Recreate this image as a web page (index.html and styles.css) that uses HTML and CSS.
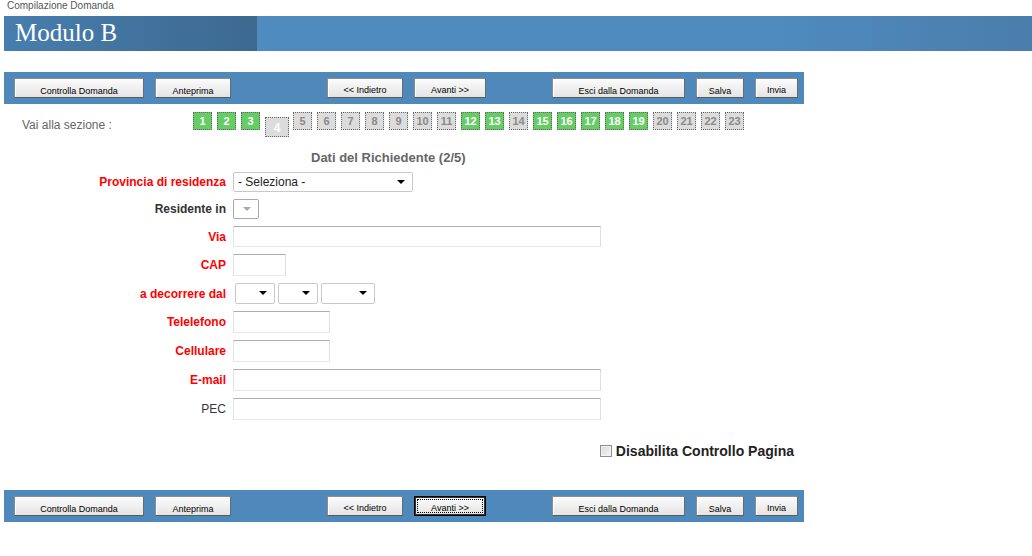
FILE: index.html
```html
<!DOCTYPE html>
<html lang="it">
    <head>
        <meta charset="UTF-8">
        <title>Compilazione Domanda - Modulo B</title>
        <link rel="stylesheet" href="styles.css">
    </head>
    <body>
        <div class="crumb">Compilazione Domanda</div>
        <div class="header">
            <div class="header-title">Modulo B</div>
        </div>

        <div class="toolbar toolbar-top">
            <button class="btn w-controlla">Controlla Domanda</button>
            <button class="btn w-anteprima">Anteprima</button>
            <button class="btn w-indietro mid">&lt;&lt; Indietro</button>
            <button class="btn w-avanti">Avanti &gt;&gt;</button>
            <button class="btn w-esci right">Esci dalla Domanda</button>
            <button class="btn w-salva">Salva</button>
            <button class="btn w-invia">Invia</button>
        </div>

        <div class="sezioni">
            <span class="sezioni-label">Vai alla sezione :</span>
            <a class="sez done">1</a>
            <a class="sez done">2</a>
            <a class="sez done">3</a>
            <a class="sez current">4</a>
            <a class="sez">5</a>
            <a class="sez">6</a>
            <a class="sez">7</a>
            <a class="sez">8</a>
            <a class="sez">9</a>
            <a class="sez">10</a>
            <a class="sez">11</a>
            <a class="sez done">12</a>
            <a class="sez done">13</a>
            <a class="sez">14</a>
            <a class="sez done">15</a>
            <a class="sez done">16</a>
            <a class="sez done">17</a>
            <a class="sez done">18</a>
            <a class="sez done">19</a>
            <a class="sez">20</a>
            <a class="sez">21</a>
            <a class="sez">22</a>
            <a class="sez">23</a>
        </div>

        <div class="titolo">Dati del Richiedente (2/5)</div>

        <div class="form">
            <label class="lbl req">Provincia di residenza</label>
            <div class="sel sel-prov">- Seleziona -</div>

            <label class="lbl">Residente in</label>
            <div class="sel sel-res disabled"></div>

            <label class="lbl req">Via</label>
            <div><input class="txt w-long h21" type="text"></div>

            <label class="lbl req">CAP</label>
            <div><input class="txt w-cap" type="text"></div>

            <label class="lbl req">a decorrere dal</label>
            <div class="date">
                <div class="sel sel-gg"></div>
                <div class="sel sel-gg"></div>
                <div class="sel sel-aa"></div>
            </div>

            <label class="lbl req">Telelefono</label>
            <div><input class="txt w-tel" type="text"></div>

            <label class="lbl req">Cellulare</label>
            <div><input class="txt w-tel" type="text"></div>

            <label class="lbl req">E-mail</label>
            <div><input class="txt w-long" type="text"></div>

            <label class="lbl plain">PEC</label>
            <div><input class="txt w-long" type="text"></div>
        </div>

        <div class="controllo">
            <input class="chk" type="checkbox">
            <span>Disabilita Controllo Pagina</span>
        </div>

        <div class="toolbar toolbar-bottom">
            <button class="btn w-controlla">Controlla Domanda</button>
            <button class="btn w-anteprima">Anteprima</button>
            <button class="btn w-indietro mid">&lt;&lt; Indietro</button>
            <button class="btn w-avanti focus">Avanti &gt;&gt;</button>
            <button class="btn w-esci right">Esci dalla Domanda</button>
            <button class="btn w-salva">Salva</button>
            <button class="btn w-invia">Invia</button>
        </div>
    </body>
</html>
```

FILE: styles.css
```css
body {
    margin: 0;
    font-family: "Liberation Sans", Arial, sans-serif;
    color: #333;
    background: #fff;
}

.crumb {
    height: 16px;
    padding-left: 7px;
    font-size: 10px;
    line-height: 11px;
    color: #555;
}

/* barra titolo */
.header {
    height: 35px;
    margin-left: 4px;
    background: linear-gradient(to right, #4f8bbf 75%, #4a7dab);
}
.header-title {
    width: 242px;
    height: 35px;
    padding-left: 11px;
    background: linear-gradient(to right, #477eae, #3c6990);
    font-family: "Liberation Serif", "Times New Roman", serif;
    font-size: 25px;
    line-height: 33px;
    color: #fff;
}

/* pulsantiera */
.toolbar {
    width: 790px;
    height: 32px;
    margin-left: 4px;
    padding-left: 10px;
    display: flex;
    align-items: center;
    background: #4f89bb;
}
.toolbar-top {
    margin-top: 21px;
}
.toolbar-bottom {
    margin-top: 31px;
}
.btn {
    position: relative;
    flex-shrink: 0;
    height: 20px;
    margin-right: 11px;
    padding: 5px 0 0;
    box-sizing: border-box;
    border: 1px solid #8c8c8c;
    border-bottom-color: #5a5a5a;
    border-right-color: #6a6a6a;
    box-shadow: inset 1px 1px 0 #fff;
    background: linear-gradient(#fcfcfc, #e4e4e4);
    font-family: "Liberation Sans", Arial, sans-serif;
    font-size: 9px;
    line-height: 12px;
    color: #000;
    text-align: center;
}
.btn:last-child {margin-right: 0;}
.btn.mid {margin-left: 85px;}
.btn.right {margin-left: 55px;}
.w-controlla {width: 130px;}
.w-anteprima {width: 76px;}
.w-indietro {width: 76px; padding-top: 3px;}
.w-avanti {width: 72px; padding-top: 4px;}
.w-esci {width: 133px;}
.w-salva {width: 48px;}
.w-invia {width: 43px; padding-top: 3px;}
.btn.focus {
    border: 1px solid #000;
    box-shadow: inset 0 0 0 1px #333;
}
.btn.focus::after {
    content: "";
    position: absolute;
    left: 2px;
    top: 2px;
    right: 2px;
    bottom: 2px;
    border: 1px dotted #000;
}

/* sezioni */
.sezioni {
    height: 25px;
    margin-top: 8px;
    display: flex;
    align-items: flex-start;
}
.sezioni-label {
    width: 193px;
    flex-shrink: 0;
    padding: 5px 0 0 22px;
    box-sizing: border-box;
    font-size: 12px;
    line-height: 16px;
    color: #666;
}
.sez {
    width: 19px;
    height: 18px;
    flex-shrink: 0;
    margin-right: 5px;
    box-sizing: border-box;
    border: 1px dotted #666;
    background: #dcdcdc;
    font-size: 11px;
    font-weight: bold;
    line-height: 16px;
    text-align: center;
    color: #8a8a8a;
}
.sez.done {
    background: #66cc66;
    color: #fff;
}
.sez.current {
    width: 24px;
    height: 20px;
    margin-top: 5px;
    margin-right: 4px;
    font-size: 12px;
    line-height: 20px;
    color: #fff;
}

.titolo {
    margin-top: 13px;
    padding-left: 311px;
    font-size: 13px;
    font-weight: bold;
    line-height: 16px;
    color: #666;
}

/* form dati */
.form {
    margin-top: 6px;
    display: grid;
    grid-template-columns: 226px auto;
    column-gap: 7px;
    row-gap: 7px;
    align-items: center;
}
.lbl {
    font-size: 12px;
    font-weight: bold;
    text-align: right;
    color: #333;
}
.lbl.req {color: #f00;}
.lbl.plain {
    font-weight: normal;
    color: #333344;
}
.txt {
    display: block;
    height: 22px;
    margin: 0;
    padding: 0 3px;
    box-sizing: border-box;
    border: 1px solid;
    border-color: #abadb3 #dbdfe6 #e3e9ef #e2e3ea;
    font-family: "Liberation Sans", Arial, sans-serif;
    font-size: 12px;
}
.h21 {height: 21px;}
.w-long {width: 368px;}
.w-cap {width: 53px;}
.w-tel {width: 97px;}

.sel {
    position: relative;
    height: 20px;
    box-sizing: border-box;
    border: 1px solid #c9c9c9;
    border-radius: 2px;
    background: #fff;
    padding-left: 4px;
    font-size: 12px;
    line-height: 18px;
    color: #222;
}
.sel::after {
    content: "";
    position: absolute;
    right: 7px;
    top: 7px;
    border-left: 4px solid transparent;
    border-right: 4px solid transparent;
    border-top: 4px solid #000;
}
.sel-prov {width: 180px;}
.sel-res {width: 26px;}
.sel.disabled {border-color: #a9a9a9;}
.sel.disabled::after {border-top-color: #aaa;}
.date {
    display: flex;
    gap: 3px;
    margin-left: 2px;
}
.sel-gg {width: 40px; height: 21px;}
.sel-aa {width: 54px; height: 21px;}

/* controllo pagina */
.controllo {
    width: 794px;
    margin-top: 23px;
    display: flex;
    justify-content: flex-end;
    align-items: center;
    gap: 4px;
    font-size: 14px;
    font-weight: bold;
    line-height: 16px;
    color: #222;
}
.chk {
    appearance: none;
    width: 12px;
    height: 12px;
    margin: 0;
    border: 1px solid #8f8f8f;
    background: linear-gradient(135deg, #d8d8d8, #f6f6f6);
    box-shadow: inset 0 0 0 1px #f2f2f2;
}
```
